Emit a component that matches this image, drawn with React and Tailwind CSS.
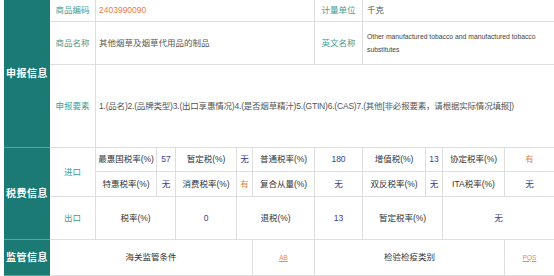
const cols =
  "grid grid-cols-[46px_61px_19px_61px_16px_62px_48px_63px_17px_62px_1fr]";

const Cell = ({ className = "", children }) => (
  <div
    className={`flex items-center border-r border-b border-[#dedede] ${className}`}
  >
    {children}
  </div>
);

const Side = ({ title, h }) => (
  <div
    className={`${h} w-[46px] shrink-0 bg-[#1b7a73] border-b border-[#5ea39e] flex items-center justify-center text-white font-bold text-[10px] tracking-[0.5px]`}
  >
    {title}
  </div>
);

const lab = "justify-center text-[#3f9c95]";
const num = "justify-center text-[#3d3d8e]";
const org = "justify-center text-[#e0844d]";
const dark = "justify-center text-[#333]";

export default function App() {
  return (
    <div
      className="w-[554px] h-[276px] overflow-hidden bg-white pl-1 text-[8.5px] text-[#555]"
      style={{ fontFamily: '"Liberation Sans", "Noto Sans CJK SC", sans-serif' }}
    >
      {/* 申报信息 */}
      <div className="flex">
        <Side title="申报信息" h="h-[148px]" />
        <div className={`${cols} flex-1 grid-rows-[22px_43px_83px]`}>
          <Cell className={lab}>商品编码</Cell>
          <Cell className="col-span-5 pl-[3px] text-[#ec7b45]">2403990090</Cell>
          <Cell className={lab}>计量单位</Cell>
          <Cell className="col-span-4 pl-[4px] border-r-0">千克</Cell>

          <Cell className={lab}>商品名称</Cell>
          <Cell className="col-span-5 pl-[3px]">其他烟草及烟草代用品的制品</Cell>
          <Cell className={lab}>英文名称</Cell>
          <Cell className="col-span-4 pl-[4px] pr-2 border-r-0 text-[6.8px] leading-[13px] text-[#444]">
            Other manufactured tobacco and manufactured tobacco substitutes
          </Cell>

          <Cell className={lab}>申报要素</Cell>
          <Cell className="col-span-10 pl-[3px] border-r-0 tracking-[-0.2px]">
            1.(品名)2.(品牌类型)3.(出口享惠情况)4.(是否烟草精汁)5.(GTIN)6.(CAS)7.(其他[非必报要素，请根据实际情况填报])
          </Cell>
        </div>
      </div>

      {/* 税费信息 */}
      <div className="flex">
        <Side title="税费信息" h="h-[92px]" />
        <div className={`${cols} flex-1 grid-rows-[24px_25px_43px]`}>
          <Cell className={`${lab} row-span-2`}>进口</Cell>
          <Cell className={dark}>最惠国税率(%)</Cell>
          <Cell className={num}>57</Cell>
          <Cell className={dark}>暂定税(%)</Cell>
          <Cell className={num}>无</Cell>
          <Cell className={dark}>普通税率(%)</Cell>
          <Cell className={num}>180</Cell>
          <Cell className={dark}>增值税(%)</Cell>
          <Cell className={num}>13</Cell>
          <Cell className={dark}>协定税率(%)</Cell>
          <Cell className={`${org} border-r-0`}>有</Cell>

          <Cell className={dark}>特惠税率(%)</Cell>
          <Cell className={num}>无</Cell>
          <Cell className={dark}>消费税率(%)</Cell>
          <Cell className={org}>有</Cell>
          <Cell className={dark}>复合从量(%)</Cell>
          <Cell className={num}>无</Cell>
          <Cell className={dark}>双反税率(%)</Cell>
          <Cell className={num}>无</Cell>
          <Cell className={dark}>ITA税率(%)</Cell>
          <Cell className={`${num} border-r-0`}>无</Cell>

          <Cell className={lab}>出口</Cell>
          <Cell className={`${dark} col-span-2`}>税率(%)</Cell>
          <Cell className={num}>0</Cell>
          <Cell className={`${dark} col-span-2`}>退税(%)</Cell>
          <Cell className={num}>13</Cell>
          <Cell className={`${dark} col-span-2`}>暂定税率(%)</Cell>
          <Cell className={`${num} col-span-2 border-r-0`}>无</Cell>
        </div>
      </div>

      {/* 监管信息 */}
      <div className="flex">
        <Side title="监管信息" h="h-[36px]" />
        <div className={`${cols} flex-1 grid-rows-[36px]`}>
          <Cell className={`${dark} col-span-5`}>海关监管条件</Cell>
          <Cell className="justify-center">
            <span className="text-[6.5px] text-[#e8894f] underline">AB</span>
          </Cell>
          <Cell className={`${dark} col-span-4`}>检验检疫类别</Cell>
          <Cell className="justify-center border-r-0">
            <span className="text-[6.5px] text-[#e8894f] underline">PQS</span>
          </Cell>
        </div>
      </div>
    </div>
  );
}
